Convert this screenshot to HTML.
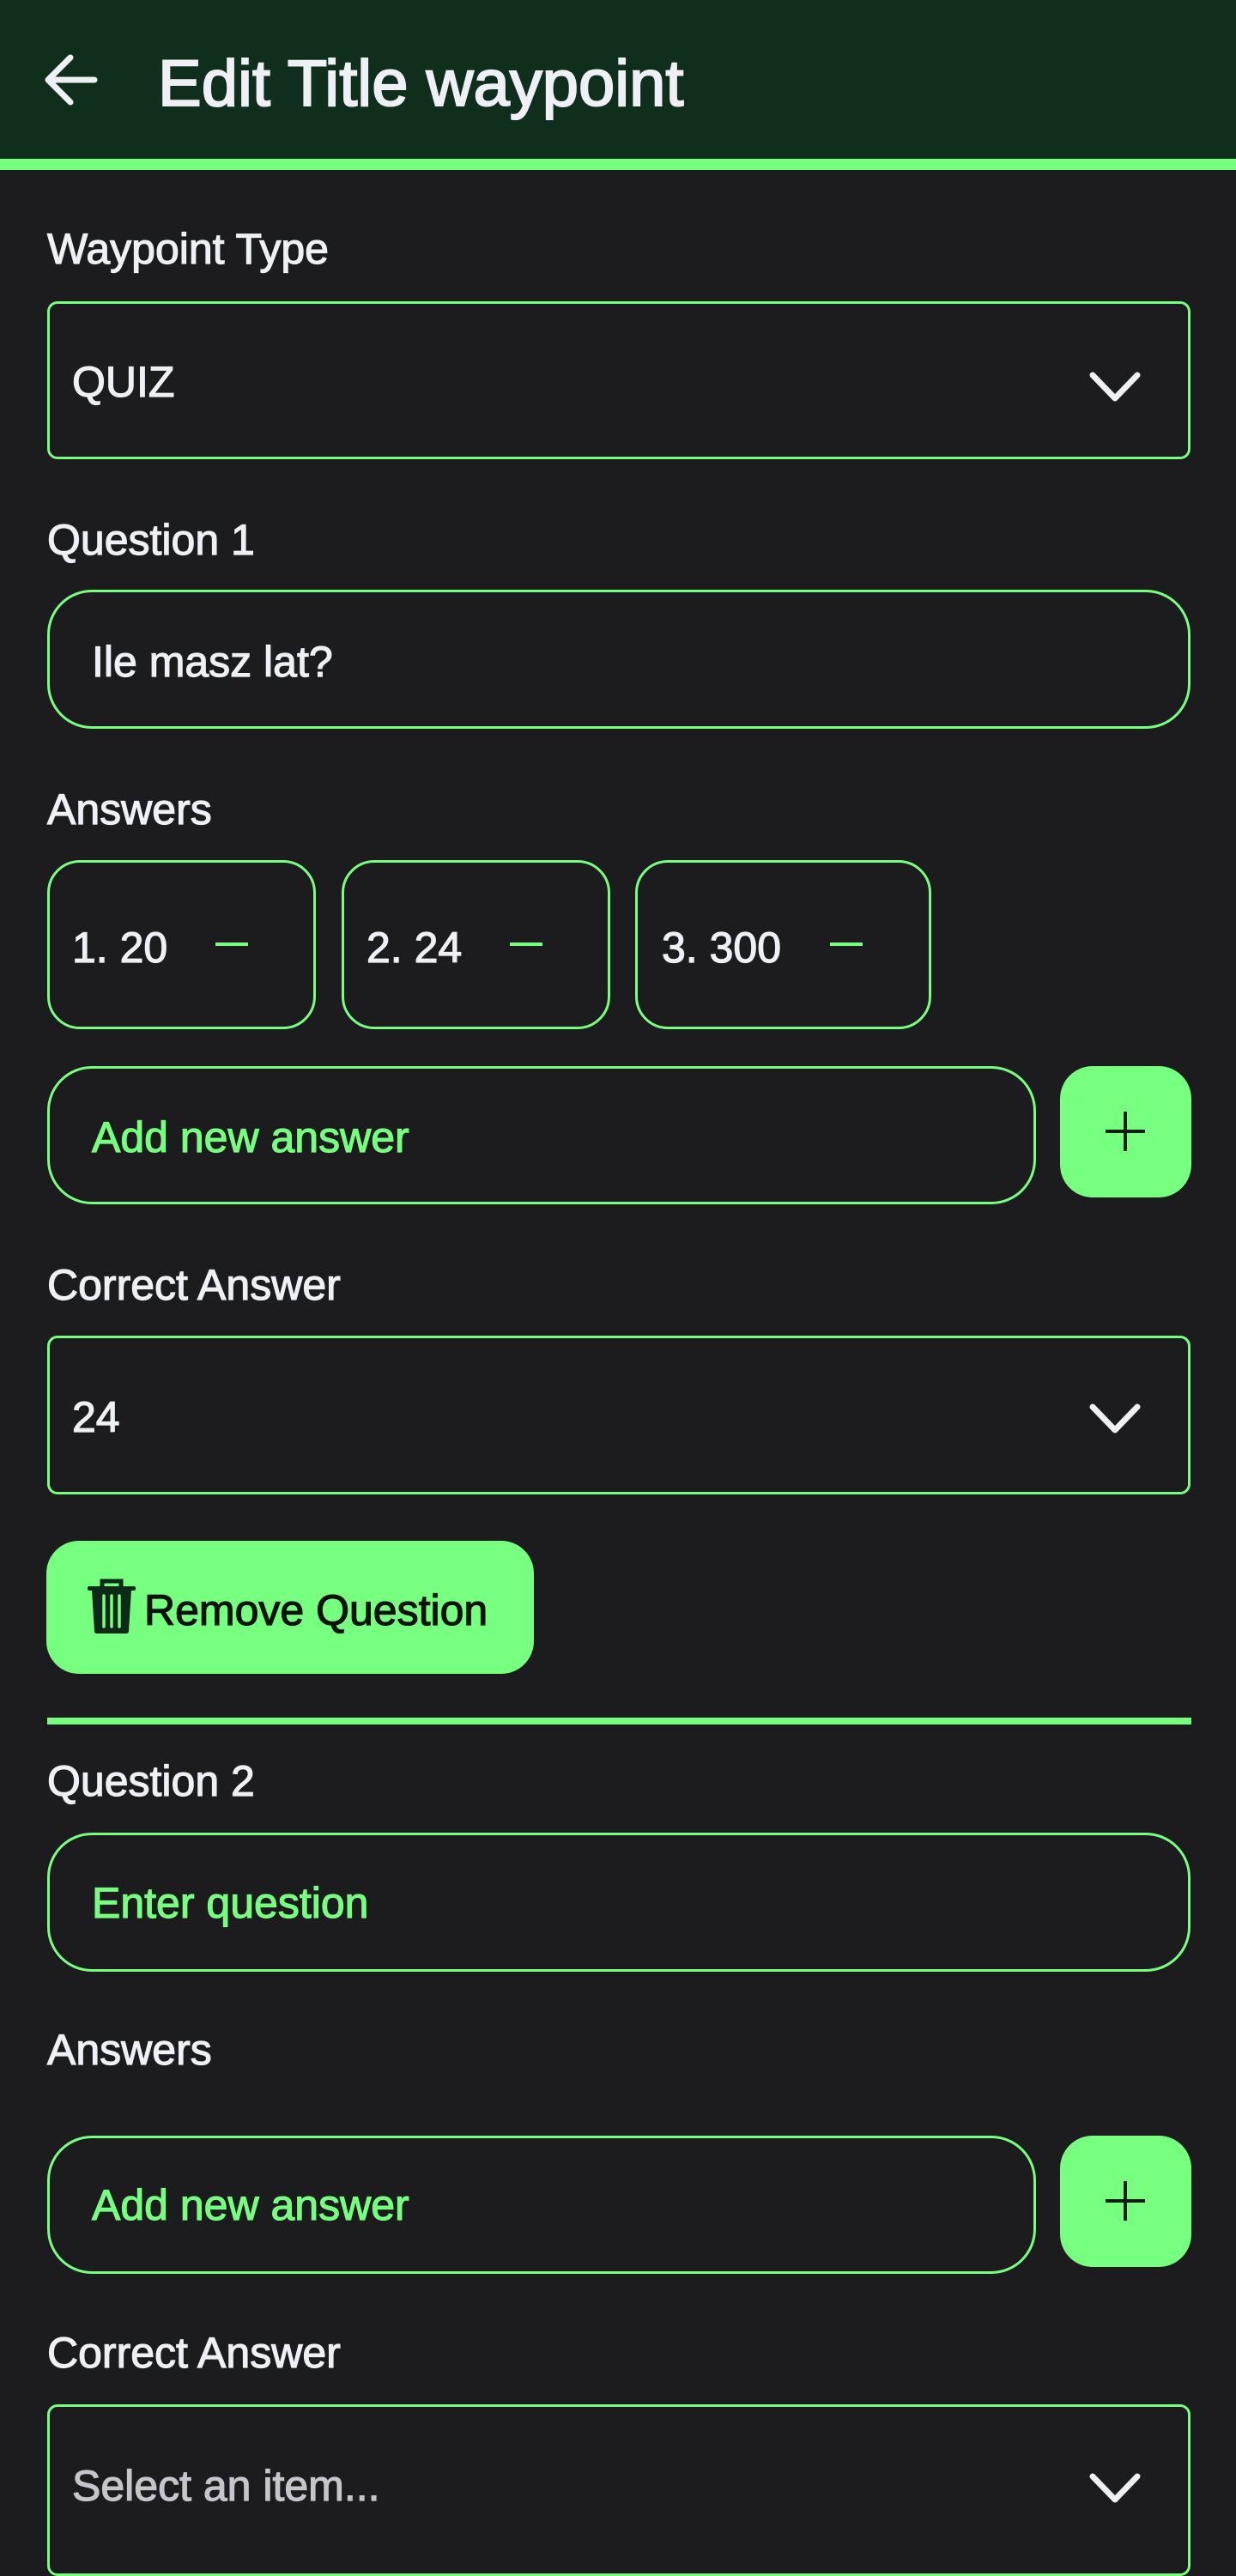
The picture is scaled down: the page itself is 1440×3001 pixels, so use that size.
<!DOCTYPE html>
<html><head><meta charset="utf-8"><style>
*{margin:0;padding:0;box-sizing:border-box}
body{width:1440px;height:2951px;background:#1c1b1d;position:relative;overflow:hidden;font-family:"Liberation Sans",Roboto,sans-serif;color:#eef0f5}
.a{position:absolute}
.t{position:absolute;font-size:50px;line-height:50px;white-space:nowrap;-webkit-text-stroke:1.2px currentColor}
.g{color:#77ff7f}
.box{position:absolute;border:3px solid #77ff7f}
.minus{position:absolute;height:4px;width:38px;background:#77ff7f}
</style></head><body>
<div class="a" style="left:0;top:0;width:1440px;height:185px;background:#0f2e1c"></div>
<div class="a" style="left:0;top:185px;width:1440px;height:13px;background:#77ff7f"></div>
<svg class="a" style="left:48px;top:60px" width="70" height="66" viewBox="0 0 70 66"><path d="M62 33H8M34 7L8 33l26 26" fill="none" stroke="#eef0f5" stroke-width="7" stroke-linecap="round" stroke-linejoin="round"/></svg>
<div class="t" style="left:184px;top:60px;font-size:76px;line-height:76px;-webkit-text-stroke:2px currentColor">Edit Title waypoint</div>

<div class="t" style="left:55px;top:265px">Waypoint Type</div>
<div class="box" style="left:55px;top:351px;width:1332px;height:184px;border-radius:12px"></div>
<div class="t" style="left:84px;top:420px">QUIZ</div>
<svg class="a" style="left:1268px;top:432px" width="62" height="38" viewBox="0 0 62 38"><path d="M5 5l26 27L57 5" fill="none" stroke="#eef0f5" stroke-width="7" stroke-linecap="round" stroke-linejoin="round"/></svg>

<div class="t" style="left:55px;top:604px">Question 1</div>
<div class="box" style="left:55px;top:687px;width:1332px;height:162px;border-radius:52px"></div>
<div class="t" style="left:107px;top:746px">Ile masz lat?</div>

<div class="t" style="left:55px;top:918px">Answers</div>
<div class="box" style="left:55px;top:1002px;width:313px;height:197px;border-radius:38px"></div>
<div class="box" style="left:398px;top:1002px;width:313px;height:197px;border-radius:38px"></div>
<div class="box" style="left:740px;top:1002px;width:345px;height:197px;border-radius:38px"></div>
<div class="t" style="left:84px;top:1079px">1. 20</div>
<div class="t" style="left:427px;top:1079px">2. 24</div>
<div class="t" style="left:771px;top:1079px">3. 300</div>
<div class="minus" style="left:251px;top:1098px"></div>
<div class="minus" style="left:594px;top:1098px"></div>
<div class="minus" style="left:967px;top:1098px"></div>

<div class="box" style="left:55px;top:1242px;width:1152px;height:161px;border-radius:52px"></div>
<div class="t g" style="left:107px;top:1300px">Add new answer</div>
<div class="a" style="left:1235px;top:1242px;width:153px;height:153px;border-radius:38px;background:#77ff7f"></div>
<svg class="a" style="left:1286px;top:1293px" width="50" height="50" viewBox="0 0 50 50"><path d="M25 2v46M2 25h46" stroke="#0c1f12" stroke-width="4"/></svg>

<div class="t" style="left:55px;top:1472px">Correct Answer</div>
<div class="box" style="left:55px;top:1556px;width:1332px;height:185px;border-radius:12px"></div>
<div class="t" style="left:84px;top:1626px">24</div>
<svg class="a" style="left:1268px;top:1634px" width="62" height="38" viewBox="0 0 62 38"><path d="M5 5l26 27L57 5" fill="none" stroke="#eef0f5" stroke-width="7" stroke-linecap="round" stroke-linejoin="round"/></svg>

<div class="a" style="left:54px;top:1795px;width:568px;height:155px;border-radius:38px;background:#77ff7f"></div>
<svg class="a" style="left:100px;top:1837px" width="60" height="68" viewBox="0 0 60 68">
<path d="M19 13V5h22v8" fill="none" stroke="#0c2a17" stroke-width="5"/>
<rect x="2" y="11" width="56" height="5" rx="2" fill="#0c2a17"/>
<path d="M7 15h46l-3 48q0 3-3 3H13q-3 0-3-3z" fill="#0c2a17"/>
<path d="M21 22v36M30 22v36M39 22v36" stroke="#77ff7f" stroke-width="3.5" stroke-linecap="round"/>
</svg>
<div class="t" style="left:168px;top:1851px;color:#07120b">Remove Question</div>

<div class="a" style="left:55px;top:2001px;width:1333px;height:8px;background:#77ff7f"></div>
<div class="t" style="left:55px;top:2050px">Question 2</div>
<div class="box" style="left:55px;top:2135px;width:1332px;height:162px;border-radius:52px"></div>
<div class="t g" style="left:107px;top:2192px">Enter question</div>

<div class="t" style="left:55px;top:2363px">Answers</div>
<div class="box" style="left:55px;top:2488px;width:1152px;height:161px;border-radius:52px"></div>
<div class="t g" style="left:107px;top:2544px">Add new answer</div>
<div class="a" style="left:1235px;top:2488px;width:153px;height:153px;border-radius:38px;background:#77ff7f"></div>
<svg class="a" style="left:1286px;top:2539px" width="50" height="50" viewBox="0 0 50 50"><path d="M25 2v46M2 25h46" stroke="#0c1f12" stroke-width="4"/></svg>

<div class="t" style="left:55px;top:2716px">Correct Answer</div>
<div class="box" style="left:55px;top:2801px;width:1332px;height:200px;border-radius:12px"></div>
<div class="t" style="left:84px;top:2871px;color:#c6c5cb">Select an item...</div>
<svg class="a" style="left:1268px;top:2880px" width="62" height="38" viewBox="0 0 62 38"><path d="M5 5l26 27L57 5" fill="none" stroke="#eef0f5" stroke-width="7" stroke-linecap="round" stroke-linejoin="round"/></svg>
</body></html>
